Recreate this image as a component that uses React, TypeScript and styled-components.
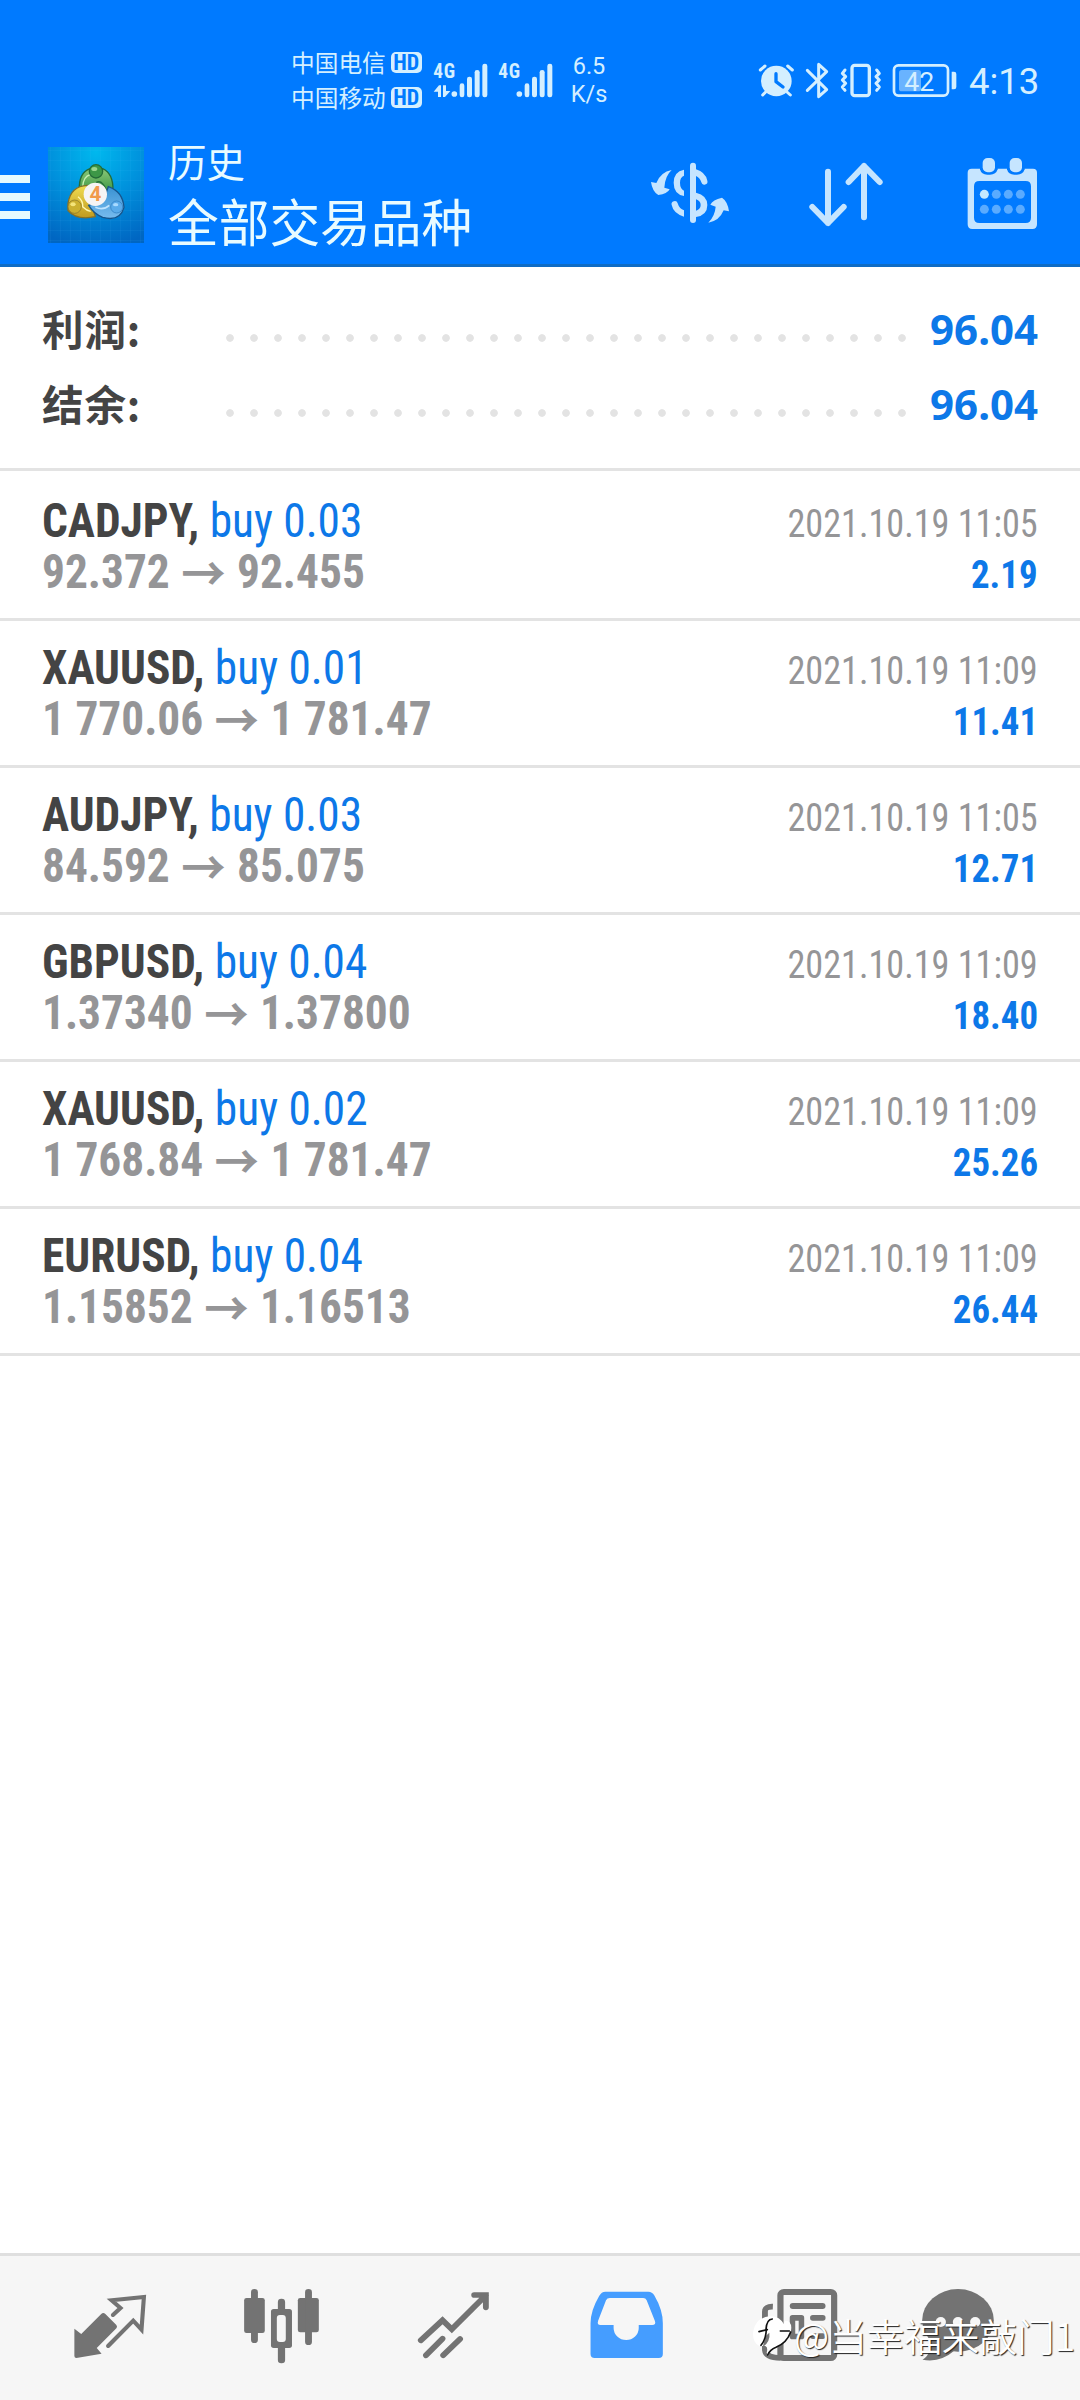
import React from "react";
import styled, { createGlobalStyle } from "styled-components";

const cjk = '"Noto Sans CJK SC", sans-serif';
const condensed = '"Roboto Condensed", Roboto, "Noto Sans CJK SC", sans-serif';
const pale = "#d4efff";
const action = "#c6e5ff";
const grey = "#737373";
const blue = "#0d78e8";

const GlobalStyle = createGlobalStyle`
  body { margin: 0; background: #fff; }
  * { box-sizing: border-box; }
  svg { display: block; flex: none; }
`;

const Screen = styled.div`
  position: relative;
  display: flex;
  flex-direction: column;
  width: 1080px;
  height: 2400px;
  overflow: hidden;
  background: #fff;
  font-family: ${cjk};
`;

const Header = styled.header`
  height: 267px;
  background: #007aff;
  border-bottom: 3px solid #0f6cc4;
`;

const StatusBar = styled.div`
  display: flex;
  align-items: center;
  height: 130px;
  padding: 29px 41px 0 291px;
  color: ${pale};
`;

const Carriers = styled.div`
  display: flex;
  flex-direction: column;
  width: 141px;
`;

const Carrier = styled.div`
  display: flex;
  align-items: center;
  gap: 5px;
  height: 35px;
  font-size: 23.7px;
  line-height: 35px;
  white-space: nowrap;
`;

const HdBadge = styled.span`
  width: 31px;
  height: 21px;
  border-radius: 5px;
  background: ${pale};
  color: #007aff;
  font: 700 22px/22px ${condensed};
  text-align: center;
`;

const Speed = styled.div`
  width: 66px;
  margin-right: auto;
  font: 400 23.5px/28px Roboto, sans-serif;
  text-align: center;
`;

const StatusIcons = styled.div`
  display: flex;
  align-items: center;
  padding-top: 3px;
`;

const Clock = styled.span`
  width: 70px;
  margin-left: 10px;
  padding-top: 2px;
  font: 400 36.5px/44px Roboto, sans-serif;
  white-space: nowrap;
`;

const Toolbar = styled.div`
  display: flex;
  align-items: flex-start;
  height: 134px;
`;

const MenuButton = styled.button`
  display: flex;
  flex-direction: column;
  gap: 10px;
  width: 30px;
  margin-top: 45px;
  padding: 0;
  border: 0;
  background: none;
`;

const MenuBar = styled.span`
  height: 8px;
  background: #e6faff;
`;

const LogoBox = styled.div`
  margin: 17px 24px 0 18px;
`;

const Titles = styled.div`
  flex: 1;
  color: #e8fbff;
  white-space: nowrap;
`;

const Subtitle = styled.div`
  margin-top: 2px;
  font-size: 38.5px;
  line-height: 56px;
`;

const Title = styled.h1`
  margin: 0;
  font-size: 50.7px;
  font-weight: 400;
  line-height: 64px;
`;

const Actions = styled.div`
  display: flex;
  gap: 72px;
  padding: 21px 36px 0 0;
`;

const Summary = styled.section`
  padding: 24px 42px 27px;
  border-bottom: 3px solid #e3e3e3;
`;

const SummaryRow = styled.div`
  display: flex;
  height: 75px;
  line-height: 75px;
`;

const SummaryLabel = styled.span`
  width: 176px;
  color: #444;
  font-size: 41.5px;
  font-weight: 700;
  letter-spacing: 0.9px;
`;

const Leader = styled.span`
  flex: 1;
  background: radial-gradient(circle at 12px 47px, #e3e3e3 3.4px, transparent 4.2px) 0 0 / 24px 75px repeat-x;
`;

const SummaryValue = styled.span`
  width: 124px;
  color: ${blue};
  font-family: "Noto Sans", sans-serif;
  font-size: 42px;
  font-weight: 700;
  text-align: right;
`;

const Deals = styled.main`
  flex: 1;
  padding-top: 3px;
`;

const Deal = styled.article`
  height: 147px;
  padding: 21px 42px 0;
  border-bottom: 3px solid #e3e3e3;
`;

const DealLine = styled.div`
  display: flex;
  justify-content: space-between;
  align-items: baseline;
  height: 51px;
  font-family: ${condensed};
  font-size: 48px;
  line-height: 51px;
  white-space: nowrap;
`;

const Detail = styled.span`
  transform: scaleX(0.945);
  transform-origin: left;
`;

const Symbol = styled.span`
  color: #444;
  font-weight: 700;
`;

const Order = styled.span`
  color: ${blue};
  font-weight: 400;
`;

const Prices = styled.span`
  color: #959597;
  font-weight: 700;
`;

const Arrow = styled.span`
  position: relative;
  top: 3px;
  margin: 0 1px;
  font-family: ${cjk};
  font-size: 47px;
  line-height: 0;
`;

const Time = styled.span`
  color: #959597;
  font-size: 39px;
  transform: scaleX(0.928);
  transform-origin: right;
`;

const Profit = styled.span`
  color: ${blue};
  font-size: 38.5px;
  font-weight: 700;
  transform: scaleX(0.957);
  transform-origin: right;
`;

const TabBar = styled.nav`
  display: flex;
  height: 147px;
  padding: 24px 0 0 24px;
  border-top: 3px solid #dfdfdf;
  background: #f6f6f6;
`;

const Tab = styled.div<{ $last?: boolean }>`
  display: flex;
  justify-content: center;
  width: ${(p) => (p.$last ? 148 : 172)}px;
`;

const Watermark = styled.div`
  position: absolute;
  left: 753px;
  top: 2308px;
  display: flex;
  align-items: center;
  height: 54px;
  color: #fff;
  font-size: 37.6px;
  font-weight: 350;
  line-height: 54px;
  text-shadow: 1px 1px 1px #222;
  white-space: nowrap;
`;

const SignalIcon = () => (
  <svg width="124" height="38" viewBox="486 90 372 114" fill={pale}>
    <text x="490" y="142" fontFamily="Roboto Condensed" fontWeight="700" fontSize="58" letterSpacing="2">4G</text>
    <text x="685" y="142" fontFamily="Roboto Condensed" fontWeight="700" fontSize="58" letterSpacing="2">4G</text>
    <path d="M491 182 507 163H513V198H504V182ZM519 163H528V180H541L525 198H519Z" />
    {[0, 195].map((dx) => (
      <g key={dx} transform={`translate(${dx} 0)`}>
        <circle cx="553" cy="189" r="8.5" />
        <rect x="569" y="157" width="14" height="42" rx="7" />
        <rect x="591" y="137" width="15" height="62" rx="7" />
        <rect x="614" y="117" width="15" height="82" rx="7" />
        <rect x="637" y="98" width="15" height="101" rx="7" />
      </g>
    ))}
  </svg>
);

const DeviceIcons = () => (
  <svg width="202" height="40" viewBox="48 60 606 120" fill="none" stroke={pale} strokeWidth="9" strokeLinecap="round" strokeLinejoin="round">
    <circle cx="106" cy="120" r="46" fill={pale} stroke="none" />
    <path d="M58 87 72 75M140 75 154 87M74 153 65 162M138 153 148 162" />
    <path d="M105 98V122L126 138" stroke="#007aff" strokeWidth="10" />
    <path d="M199 88 257 146 233 167V70L257 92 199 148" />
    <rect x="333" y="73" width="52" height="91" rx="8" strokeWidth="10" />
    <path d="M312 87 304 97 314 107 304 117 314 127 304 138 312 148M407 87 415 97 405 107 415 117 405 127 415 138 407 148" strokeWidth="9" />
    <rect x="459" y="73" width="162" height="91" rx="13" strokeWidth="8" />
    <rect x="474" y="87" width="66" height="64" rx="8" fill="#69b3ff" stroke="none" />
    <path d="M632 92H639Q646 92 646 99V138Q646 145 639 145H632Z" fill={pale} stroke="none" />
    <text x="490" y="149" fill={pale} stroke="none" fontFamily="Roboto" fontSize="80">42</text>
  </svg>
);

const Logo = () => (
  <svg width="96" height="96" viewBox="24 21 288 288">
    <defs>
      <radialGradient id="sky" cx="0.5" cy="0.05" r="1">
        <stop offset="0" stopColor="#00b8ee" />
        <stop offset="0.5" stopColor="#0090dc" />
        <stop offset="1" stopColor="#0066c2" />
      </radialGradient>
      <linearGradient id="green" x2="0" y2="1"><stop stopColor="#8cc878" /><stop offset="1" stopColor="#2f8f3c" /></linearGradient>
      <linearGradient id="gold" x2="0" y2="1"><stop stopColor="#f0dc50" /><stop offset="1" stopColor="#c09a20" /></linearGradient>
      <linearGradient id="azure" x2="0" y2="1"><stop stopColor="#3a92d2" /><stop offset="1" stopColor="#77bbee" /></linearGradient>
      <pattern id="mesh" width="30" height="30" patternUnits="userSpaceOnUse">
        <path d="M30 0H0V30" fill="none" stroke="#5cc4ff" strokeOpacity="0.2" strokeWidth="2" />
      </pattern>
    </defs>
    <rect x="24" y="21" width="288" height="288" fill="url(#sky)" />
    <rect x="24" y="21" width="288" height="288" fill="url(#mesh)" />
    <g strokeWidth="4">
      <path d="M118 150Q116 98 150 86H188Q220 100 219 152L205 166H125Z" fill="url(#green)" stroke="#246c38" />
      <path d="M168 128Q190 114 205 170" fill="none" stroke="#246c38" />
      <path d="M128 140Q130 110 150 104" fill="none" stroke="#c8efb4" />
      <path d="M142 136Q92 138 84 190V212Q110 242 166 230L150 180Z" fill="url(#gold)" stroke="#82702a" />
      <path d="M114 170Q130 182 128 200Q140 212 152 214" fill="none" stroke="#fff8b0" />
      <path d="M205 140Q248 154 252 202Q240 246 188 232Q160 220 146 196L190 180Z" fill="url(#azure)" stroke="#17558c" />
      <path d="M166 202Q190 212 208 196" fill="none" stroke="#bfe4ff" strokeWidth="5" />
      <circle cx="168" cy="94" r="20" fill="#3d9747" stroke="#246c38" />
      <circle cx="104" cy="200" r="20" fill="#cbb030" stroke="#82702a" strokeWidth="2" />
      <circle cx="230" cy="201" r="18" fill="#5aabea" stroke="#2b78bb" strokeWidth="2" />
    </g>
    <ellipse cx="163" cy="87" rx="9" ry="6" fill="#9bd58d" />
    <ellipse cx="99" cy="193" rx="8" ry="6" fill="#f4e47a" />
    <ellipse cx="227" cy="194" rx="8" ry="5" fill="#a9daff" />
    <circle cx="166" cy="163" r="35" fill="#f6f4f4" />
    <text x="166" y="184" textAnchor="middle" fontFamily="Roboto" fontWeight="700" fontSize="62" fill="#f19a4c">4</text>
  </svg>
);

const ExchangeIcon = () => (
  <svg width="84" height="84" viewBox="84 33 252 252" fill={action}>
    <rect x="210" y="68" width="18" height="181" rx="9" />
    <path d="M192 89Q161 95 161 128Q161 162 192 168V152Q180 146 180 128Q180 112 192 107Z" />
    <path d="M155 195A9 9 0 0 1 173 190Q178 207 192 211V230Q160 220 155 195Z" />
    <path d="M228 88Q256 96 262 122A9 9 0 0 1 244 127Q239 112 228 108Z" />
    <path d="M228 158Q262 166 262 195Q262 226 228 231V212Q242 208 242 195Q242 183 228 178Z" />
    <path d="M155 90Q135 108 133 143L149 148Q142 162 115 165Q97 155 93 126L109 129Q122 96 155 90Z" />
    <path d="M265 248Q285 228 287 200L271 194Q278 179 306 173Q323 184 327 214L311 211Q298 243 265 248Z" />
  </svg>
);

const SortIcon = () => (
  <svg width="84" height="84" viewBox="552 33 252 252" fill="none" stroke={action} strokeWidth="18" strokeLinecap="round" strokeLinejoin="round">
    <path d="M624 95V249M577 201 624 249 671 201M732 232V78M686 126 732 78 779 126" />
  </svg>
);

const CalendarIcon = () => (
  <svg width="84" height="84" viewBox="1020 33 252 252" fill={action}>
    <path fillRule="evenodd" d="M1055 86H1239Q1251 86 1251 98V253Q1251 267 1237 267H1057Q1043 267 1043 253V98Q1043 86 1055 86ZM1078 123Q1062 123 1062 139V233Q1062 249 1078 249H1217Q1233 249 1233 233V139Q1233 123 1217 123Z" />
    {[1088, 1169].map((x) => (
      <g key={x}>
        <path d={`M${x - 8} 84V88Q${x - 4} 104 ${x + 14} 104H${x + 22}Q${x + 40} 104 ${x + 45} 88V84Z`} fill="#007aff" />
        <rect x={x} y="54" width="37" height="43" rx="15" />
      </g>
    ))}
    {[163, 208].map((y) =>
      [1093, 1129, 1165, 1201].map((x) => (
        <circle key={`${x}-${y}`} cx={x} cy={y} r="13.5" fill={x === 1093 && y === 163 ? "#c4e8ff" : "#5aabff"} />
      ))
    )}
  </svg>
);

const tabSvg = { width: 84, height: 84, preserveAspectRatio: "none" };

const QuotesIcon = () => (
  <svg {...tabSvg} viewBox="197.5 120 244 252" fill={grey}>
    <path d="M216 266 236 282 294 222Q300 216 306 222L338 255Q342 260 338 265L281 324 295 341 222 354Q216 354 216 348Z" />
    <path d="M328 225 350 204 324 181 418 171 411 269 387 242 314 318" fill="none" stroke={grey} strokeWidth="12" strokeLinecap="round" />
  </svg>
);

const ChartIcon = () => (
  <svg {...tabSvg} viewBox="697 120 244 252" fill={grey}>
    <rect x="709" y="174" width="60" height="105" rx="7" />
    <rect x="729" y="147" width="20" height="162" rx="10" />
    <rect x="865" y="174" width="61" height="103" rx="7" />
    <rect x="886" y="147" width="20" height="168" rx="10" />
    <rect x="807" y="176" width="21" height="60" rx="10" />
    <rect x="807" y="310" width="21" height="60" rx="10" />
    <rect x="787" y="207" width="61" height="117" rx="8" />
    <rect x="804" y="225" width="26" height="81" rx="9" fill="#f6f6f6" />
  </svg>
);

const TradeIcon = () => (
  <svg {...tabSvg} viewBox="1196.4 120 244 252" fill="none" stroke={grey} strokeWidth="17" strokeLinecap="round">
    <path d="M1222 301 1285 241 1312 268 1411 166M1377 165H1411V202" />
    <path d="M1237 346 1285 296M1287 346 1336 297" />
  </svg>
);

const HistoryIcon = () => (
  <svg {...tabSvg} viewBox="128 120 244 252" fill="#459dff">
    <path fillRule="evenodd" d="M190 155H315Q326 155 332 166Q357 210 357 250V342Q357 354 345 354H159Q147 354 147 342V250Q147 212 172 168Q179 155 190 155ZM203 174Q195 174 192 181L169 242Q165 255 176 255H214V264A36.5 36 0 0 0 287 264V255H326Q338 255 334 243L310 181Q307 174 300 174Z" />
  </svg>
);

const NewsIcon = () => (
  <svg {...tabSvg} viewBox="628 120 244 252" fill={grey}>
    <rect x="699" y="156" width="156" height="198" rx="10" fill="none" stroke={grey} strokeWidth="18" />
    <path d="M677 200Q654 199 654 215V330Q656 353 700 354" fill="none" stroke={grey} strokeWidth="17" />
    <rect x="726" y="189" width="104" height="18" rx="9" />
    <path fillRule="evenodd" d="M734 225H760Q768 225 768 233V290Q768 298 760 298H734Q726 298 726 290V233Q726 225 734 225ZM742 242V281H752V242Z" />
    <rect x="785" y="225" width="45" height="17" rx="8" />
    <rect x="785" y="280" width="45" height="17" rx="8" />
  </svg>
);

const ChatIcon = () => (
  <svg {...tabSvg} viewBox="1091 120 244 252" fill={grey}>
    <ellipse cx="1213" cy="241" rx="104" ry="94" />
    <path d="M1128 290Q1142 338 1110 359Q1160 370 1205 330Z" />
    {[1163, 1213, 1263].map((x) => (
      <circle key={x} cx={x} cy="246" r="15" fill="#f6f6f6" />
    ))}
  </svg>
);

const WatermarkLogo = () => (
  <svg width="41" height="46" viewBox="9 120 123 138">
    <path d="M28 222Q5 210 10 176Q18 138 58 133Q88 131 103 158Q100 140 118 150Q128 162 121 182Q112 210 78 226Q62 232 54 251L50 242Q55 226 46 222Z" fill="#fff" />
    <path d="M58 182Q62 208 38 226L47 192Z" fill={grey} />
    <path d="M67 141Q50 142 48 172M27 179 52 173M49 172Q48 202 33 220M91 177H118M122 180Q111 212 78 226Q60 233 53 249" fill="none" stroke="#111" strokeWidth="5" strokeLinecap="round" />
  </svg>
);

const totals = [
  { label: "利润:", value: "96.04" },
  { label: "结余:", value: "96.04" },
];

const deals = [
  { symbol: "CADJPY", order: "buy 0.03", open: "92.372", close: "92.455", time: "2021.10.19 11:05", profit: "2.19" },
  { symbol: "XAUUSD", order: "buy 0.01", open: "1 770.06", close: "1 781.47", time: "2021.10.19 11:09", profit: "11.41" },
  { symbol: "AUDJPY", order: "buy 0.03", open: "84.592", close: "85.075", time: "2021.10.19 11:05", profit: "12.71" },
  { symbol: "GBPUSD", order: "buy 0.04", open: "1.37340", close: "1.37800", time: "2021.10.19 11:09", profit: "18.40" },
  { symbol: "XAUUSD", order: "buy 0.02", open: "1 768.84", close: "1 781.47", time: "2021.10.19 11:09", profit: "25.26" },
  { symbol: "EURUSD", order: "buy 0.04", open: "1.15852", close: "1.16513", time: "2021.10.19 11:09", profit: "26.44" },
];

export default function App() {
  return (
    <Screen>
      <GlobalStyle />
      <Header>
        <StatusBar>
          <Carriers>
            <Carrier>中国电信<HdBadge>HD</HdBadge></Carrier>
            <Carrier>中国移动<HdBadge>HD</HdBadge></Carrier>
          </Carriers>
          <SignalIcon />
          <Speed>
            <div>6.5</div>
            <div>K/s</div>
          </Speed>
          <StatusIcons>
            <DeviceIcons />
            <Clock>4:13</Clock>
          </StatusIcons>
        </StatusBar>
        <Toolbar>
          <MenuButton aria-label="menu">
            <MenuBar />
            <MenuBar />
            <MenuBar />
          </MenuButton>
          <LogoBox><Logo /></LogoBox>
          <Titles>
            <Subtitle>历史</Subtitle>
            <Title>全部交易品种</Title>
          </Titles>
          <Actions>
            <ExchangeIcon />
            <SortIcon />
            <CalendarIcon />
          </Actions>
        </Toolbar>
      </Header>
      <Summary>
        {totals.map((t) => (
          <SummaryRow key={t.label}>
            <SummaryLabel>{t.label}</SummaryLabel>
            <Leader />
            <SummaryValue>{t.value}</SummaryValue>
          </SummaryRow>
        ))}
      </Summary>
      <Deals>
        {deals.map((d, i) => (
          <Deal key={i}>
            <DealLine>
              <Detail><Symbol>{d.symbol}, </Symbol><Order>{d.order}</Order></Detail>
              <Time>{d.time}</Time>
            </DealLine>
            <DealLine>
              <Detail><Prices>{d.open} <Arrow>→</Arrow> {d.close}</Prices></Detail>
              <Profit>{d.profit}</Profit>
            </DealLine>
          </Deal>
        ))}
      </Deals>
      <TabBar>
        <Tab><QuotesIcon /></Tab>
        <Tab><ChartIcon /></Tab>
        <Tab><TradeIcon /></Tab>
        <Tab><HistoryIcon /></Tab>
        <Tab><NewsIcon /></Tab>
        <Tab $last><ChatIcon /></Tab>
      </TabBar>
      <Watermark>
        <WatermarkLogo />
        <span>@当幸福来敲门1</span>
      </Watermark>
    </Screen>
  );
}
